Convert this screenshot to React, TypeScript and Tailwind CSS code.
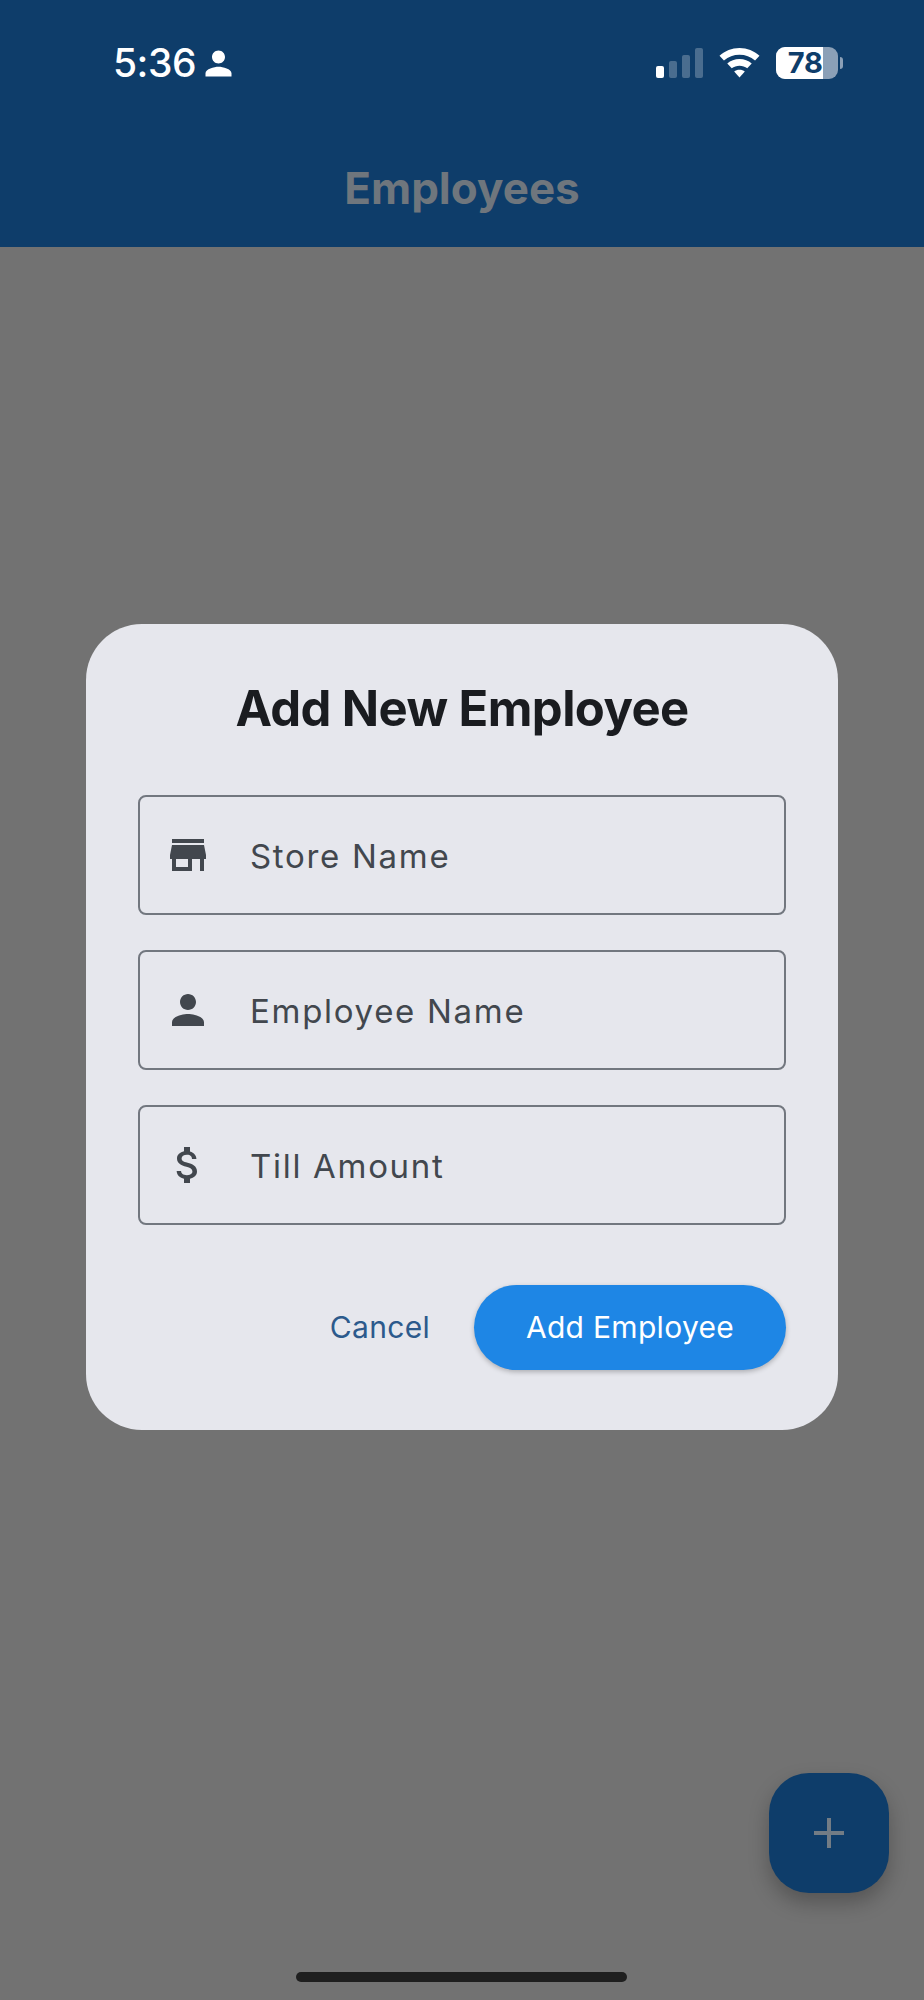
import React from "react";

const font = "font-['Inter','Noto_Sans',sans-serif]";

function PersonIcon({ className }: { className: string }) {
  return (
    <svg viewBox="0 0 24 24" fill="currentColor" className={className}>
      <path d="M12 12c2.21 0 4-1.79 4-4s-1.79-4-4-4-4 1.79-4 4 1.790 4 4 4zm0 2c-2.670 0-8 1.340-8 4v2h16v-2c0-2.660-5.330-4-8-4z" />
    </svg>
  );
}

function StoreIcon({ className }: { className: string }) {
  return (
    <svg viewBox="0 0 24 24" fill="currentColor" className={className}>
      <path d="M20 4H4v2h16V4zm1 10v-2l-1-5H4l-1 5v2h1v6h10v-6h4v6h2v-6h1zm-9 4H6v-4h6v4z" />
    </svg>
  );
}

function DollarIcon({ className }: { className: string }) {
  return (
    <svg viewBox="0 0 24 24" fill="currentColor" className={className}>
      <path d="M11.8 10.9c-2.27-.59-3-1.2-3-2.15 0-1.09 1.01-1.85 2.7-1.85 1.78 0 2.44.85 2.5 2.1h2.21c-.07-1.72-1.12-3.3-3.21-3.81V3h-3v2.16c-1.94.42-3.5 1.68-3.5 3.61 0 2.31 1.91 3.46 4.7 4.13 2.5.6 3 1.48 3 2.41 0 .69-.49 1.79-2.7 1.79-2.06 0-2.87-.92-2.98-2.1h-2.2c.12 2.19 1.76 3.42 3.68 3.83V21h3v-2.15c1.95-.37 3.5-1.5 3.5-3.55 0-2.84-2.43-3.81-4.7-4.4z" />
    </svg>
  );
}

function StatusBar() {
  return (
    <div className="flex items-center justify-between pl-[113px] pr-[81px] pt-[40px] text-white">
      <div className="flex items-center gap-[3px]">
        <span className="text-[39px] leading-[46px] font-medium tracking-[-0.5px]">5:36</span>
        <PersonIcon className="h-[39px] w-[39px]" />
      </div>
      <div className="flex items-center">
        <div className="flex items-end gap-[5px]">
          <div className="h-[12px] w-[8px] rounded-[2px] bg-white" />
          <div className="h-[17px] w-[8px] rounded-[2px] bg-white/25" />
          <div className="h-[23px] w-[8px] rounded-[2px] bg-white/25" />
          <div className="h-[30px] w-[8px] rounded-[2px] bg-white/25" />
        </div>
        <svg viewBox="3 5 36 27" fill="white" className="ml-[16px] h-[30px] w-[41px]">
          <path d="M21 5c7 0 13 2.6 18 7l-4 4.3C31 12.8 26.3 11 21 11S11 12.8 7 16.3L3 12c5-4.400 11-7 18-7z" />
          <path d="M21 15c4.300 0 8 1.500 11 4l-4 4.300c-2-1.500-4.400-2.300-7-2.300s-5 .8-7 2.300L10 19c3-2.500 6.700-4 11-4z" />
          <path d="M21 24.500c1.900 0 3.500.6 4.800 1.700L21 31.500l-4.800-5.300c1.300-1.100 2.900-1.700 4.800-1.700z" />
        </svg>
        <div className="ml-[16px] flex items-center">
          <div className="flex h-[32px] w-[62px] rounded-[9px] bg-[#8ba0b7]">
            <div className="flex w-[47px] items-center justify-end rounded-l-[9px] bg-white">
              <span className="text-[29px] leading-[32px] font-bold text-[#0e3d6a]">78</span>
            </div>
          </div>
          <div className="ml-[2px] h-[12px] w-[3px] rounded-r-[3px] bg-[#8ba0b7]" />
        </div>
      </div>
    </div>
  );
}

function Field({ icon, label }: { icon: React.ReactNode; label: string }) {
  return (
    <div className="flex h-[120px] items-center rounded-[8px] border-2 border-[#72777f] pl-[22px]">
      <div className="flex w-[52px] justify-center text-[#42474e]">{icon}</div>
      <span className="ml-[36px] pt-[2px] text-[33px] leading-none tracking-[1.7px] text-[#42474e]">{label}</span>
    </div>
  );
}

export default function App() {
  return (
    <div className={`relative flex h-[2000px] w-[924px] flex-col overflow-hidden bg-[#727272] ${font}`}>
      <header className="h-[247px] bg-[#0e3d6a]">
        <StatusBar />
        <h1 className="mt-[76px] text-center text-[44px] leading-[52px] font-bold text-[#6f767d]">Employees</h1>
      </header>

      {/* dialog */}
      <div className="absolute left-[86px] top-[624px] w-[752px] rounded-[56px] bg-[#e6e7ed] px-[52px] pt-[56px]">
        <h2 className="text-center text-[49px] leading-[58px] font-bold tracking-[-0.6px] text-[#1a1c20]">
          Add New Employee
        </h2>
        <div className="mt-[57px] flex flex-col gap-[35px]">
          <Field icon={<StoreIcon className="h-[48px] w-[48px]" />} label="Store Name" />
          <Field icon={<PersonIcon className="h-[48px] w-[48px]" />} label="Employee Name" />
          <Field icon={<DollarIcon className="h-[48px] w-[48px]" />} label="Till Amount" />
        </div>
        <div className="mt-[60px] flex items-center justify-end pb-[60px]">
          <button className="text-[30px] font-normal tracking-[0.3px] text-[#2c5a8c]">Cancel</button>
          <button className="ml-[44px] h-[85px] w-[312px] rounded-full bg-[#1e86e5] text-[30px] font-normal tracking-[0.3px] text-white shadow-[0_2px_5px_rgba(0,0,0,0.25)]">
            Add Employee
          </button>
        </div>
      </div>

      <button className="absolute left-[769px] top-[1773px] flex h-[120px] w-[120px] items-center justify-center rounded-[40px] bg-[#0e3d6a] shadow-[0_10px_20px_rgba(0,0,0,0.25)]">
        <svg viewBox="0 0 30 30" className="h-[30px] w-[30px]" fill="#727c85">
          <rect x="0" y="13" width="30" height="4" />
          <rect x="13" y="0" width="4" height="30" />
        </svg>
      </button>

      <div className="absolute bottom-[18px] left-[296px] h-[10px] w-[331px] rounded-full bg-[#1f1f1f]" />
    </div>
  );
}
